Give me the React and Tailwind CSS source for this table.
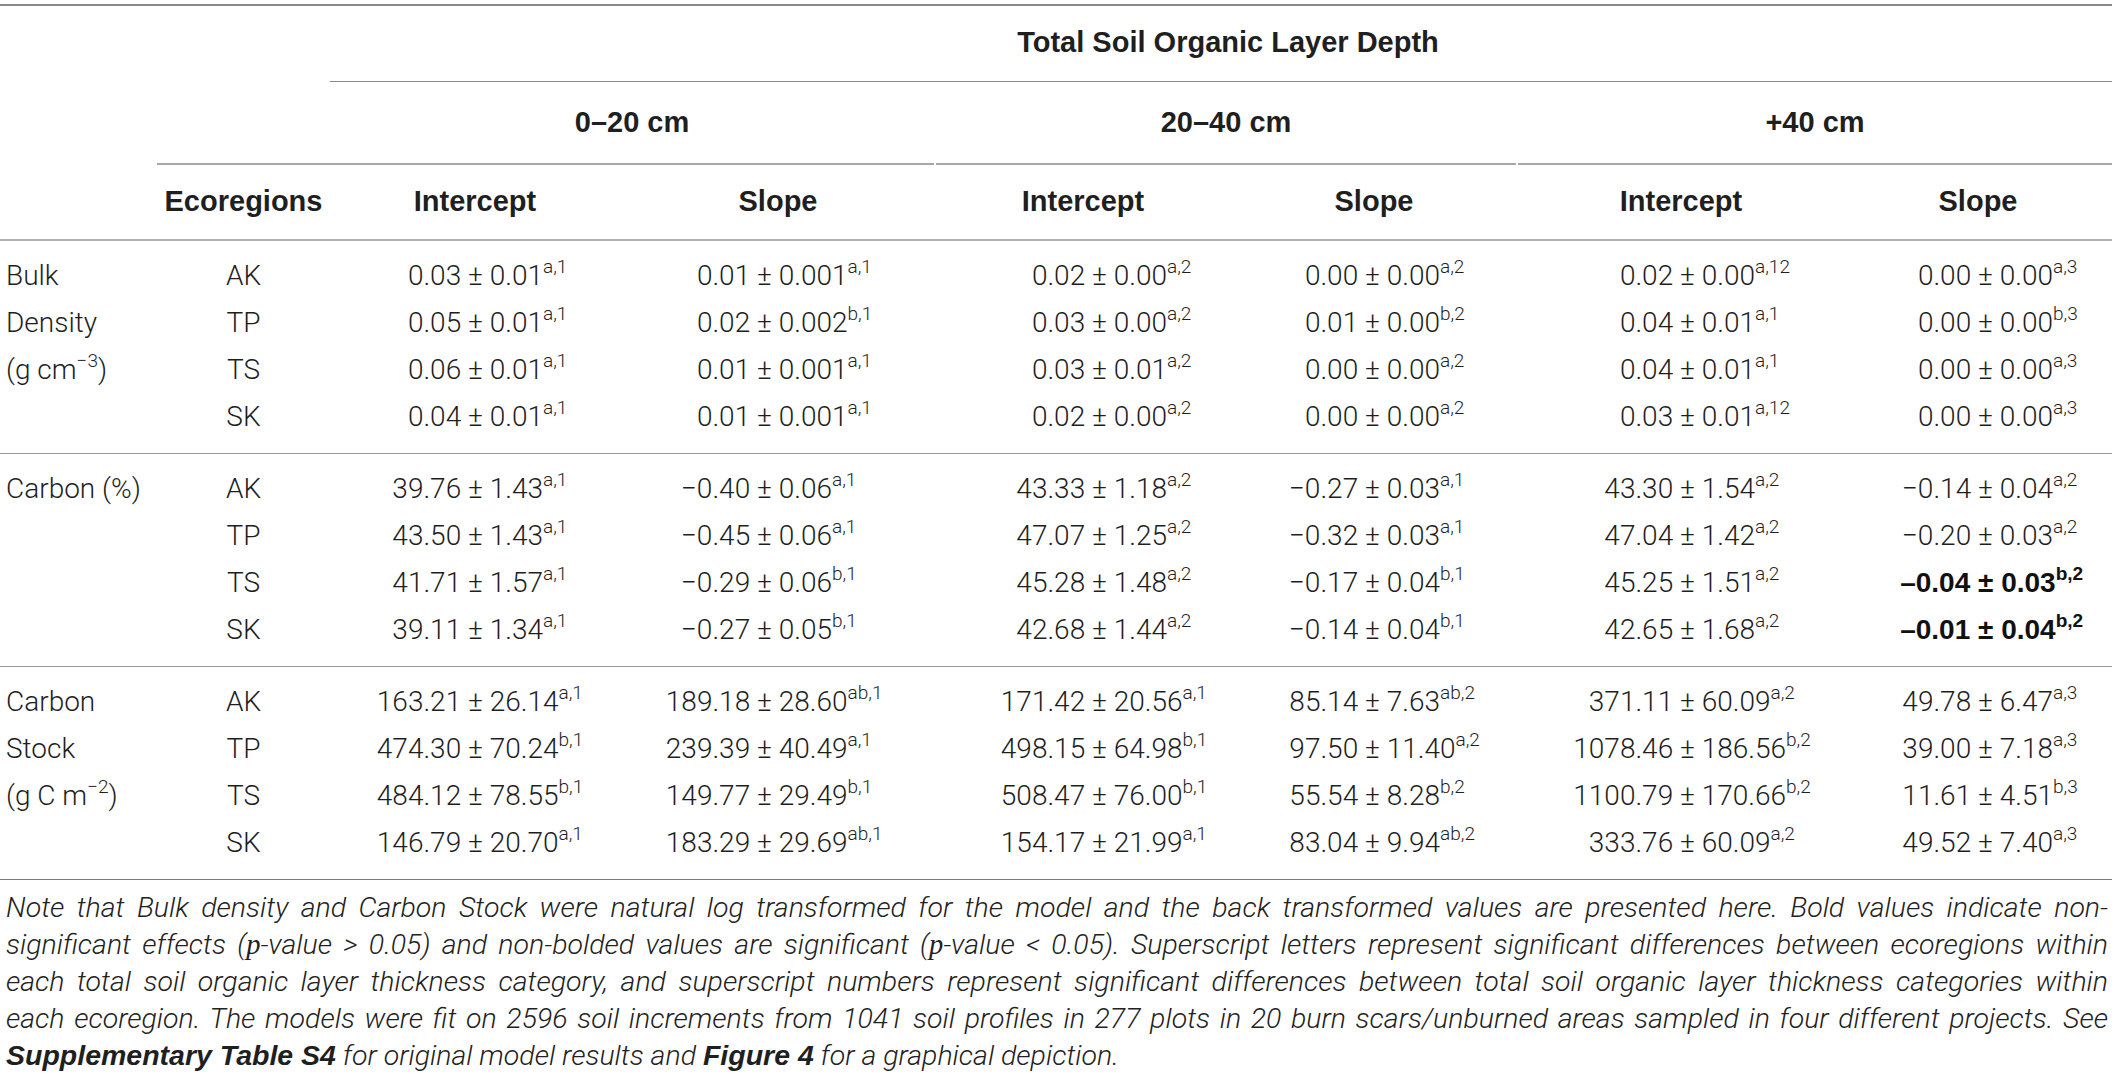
import React from "react";

const COLS = "grid grid-cols-[157px_173px_290px_316px_294px_288px_326px_268px]";
const SPLITS = ["w-[138px]", "w-[137px]", "w-[156px]", "w-[135px]", "w-[162px]", "w-[134px]"];

const groups = [
  {
    labels: ["Bulk", "Density", <>(g cm<sup className="text-[0.68em] top-[-0.6em]">−3</sup>)</>, ""],
    rows: [
      ["AK", [["0.03", "0.01", "a,1"], ["0.01", "0.001", "a,1"], ["0.02", "0.00", "a,2"], ["0.00", "0.00", "a,2"], ["0.02", "0.00", "a,12"], ["0.00", "0.00", "a,3"]]],
      ["TP", [["0.05", "0.01", "a,1"], ["0.02", "0.002", "b,1"], ["0.03", "0.00", "a,2"], ["0.01", "0.00", "b,2"], ["0.04", "0.01", "a,1"], ["0.00", "0.00", "b,3"]]],
      ["TS", [["0.06", "0.01", "a,1"], ["0.01", "0.001", "a,1"], ["0.03", "0.01", "a,2"], ["0.00", "0.00", "a,2"], ["0.04", "0.01", "a,1"], ["0.00", "0.00", "a,3"]]],
      ["SK", [["0.04", "0.01", "a,1"], ["0.01", "0.001", "a,1"], ["0.02", "0.00", "a,2"], ["0.00", "0.00", "a,2"], ["0.03", "0.01", "a,12"], ["0.00", "0.00", "a,3"]]],
    ],
  },
  {
    labels: ["Carbon (%)", "", "", ""],
    rows: [
      ["AK", [["39.76", "1.43", "a,1"], ["−0.40", "0.06", "a,1"], ["43.33", "1.18", "a,2"], ["−0.27", "0.03", "a,1"], ["43.30", "1.54", "a,2"], ["−0.14", "0.04", "a,2"]]],
      ["TP", [["43.50", "1.43", "a,1"], ["−0.45", "0.06", "a,1"], ["47.07", "1.25", "a,2"], ["−0.32", "0.03", "a,1"], ["47.04", "1.42", "a,2"], ["−0.20", "0.03", "a,2"]]],
      ["TS", [["41.71", "1.57", "a,1"], ["−0.29", "0.06", "b,1"], ["45.28", "1.48", "a,2"], ["−0.17", "0.04", "b,1"], ["45.25", "1.51", "a,2"], ["–0.04", "0.03", "b,2", true]]],
      ["SK", [["39.11", "1.34", "a,1"], ["−0.27", "0.05", "b,1"], ["42.68", "1.44", "a,2"], ["−0.14", "0.04", "b,1"], ["42.65", "1.68", "a,2"], ["–0.01", "0.04", "b,2", true]]],
    ],
  },
  {
    labels: ["Carbon", "Stock", <>(g C m<sup className="text-[0.68em] top-[-0.6em]">−2</sup>)</>, ""],
    rows: [
      ["AK", [["163.21", "26.14", "a,1"], ["189.18", "28.60", "ab,1"], ["171.42", "20.56", "a,1"], ["85.14", "7.63", "ab,2"], ["371.11", "60.09", "a,2"], ["49.78", "6.47", "a,3"]]],
      ["TP", [["474.30", "70.24", "b,1"], ["239.39", "40.49", "a,1"], ["498.15", "64.98", "b,1"], ["97.50", "11.40", "a,2"], ["1078.46", "186.56", "b,2"], ["39.00", "7.18", "a,3"]]],
      ["TS", [["484.12", "78.55", "b,1"], ["149.77", "29.49", "b,1"], ["508.47", "76.00", "b,1"], ["55.54", "8.28", "b,2"], ["1100.79", "170.66", "b,2"], ["11.61", "4.51", "b,3"]]],
      ["SK", [["146.79", "20.70", "a,1"], ["183.29", "29.69", "ab,1"], ["154.17", "21.99", "a,1"], ["83.04", "9.94", "ab,2"], ["333.76", "60.09", "a,2"], ["49.52", "7.40", "a,3"]]],
    ],
  },
];

function Val({ v, i }) {
  const [a, b, s, bold] = v;
  return (
    <div
      className={`flex items-center whitespace-nowrap ${
        bold ? "font-['Liberation_Sans',Arial,sans-serif] font-bold text-[#111]" : ""
      }`}
    >
      <span className={`${SPLITS[i]} shrink-0 text-right`}>{a}{"\u00a0"}</span>
      <span>
        ±{"\u00a0"}{b}
        <sup className="text-[0.68em] top-[-0.62em]">{s}</sup>
      </span>
    </div>
  );
}

function Group({ g, last }) {
  return (
    <div className={`pt-[11px] pb-[13px] border-b ${last ? "border-[#7a7a7a]" : "border-[#9a9a9a]"}`}>
      {g.rows.map(([eco, vals], r) => (
        <div key={eco} className={`${COLS} h-[47px] items-center`}>
          <div className="pl-[6px] whitespace-nowrap">{g.labels[r]}</div>
          <div className="text-center">{eco}</div>
          {vals.map((v, i) => (
            <Val key={i} v={v} i={i} />
          ))}
        </div>
      ))}
    </div>
  );
}

const P = () => <span className="font-['Liberation_Serif',serif]">p</span>;

const noteLines = [
  <>Note that Bulk density and Carbon Stock were natural log transformed for the model and the back transformed values are presented here. Bold values indicate non-</>,
  <>significant effects (<P />-value &gt; 0.05) and non-bolded values are significant (<P />-value &lt; 0.05). Superscript letters represent significant differences between ecoregions within</>,
  <>each total soil organic layer thickness category, and superscript numbers represent significant differences between total soil organic layer thickness categories within</>,
  <>each ecoregion. The models were fit on 2596 soil increments from 1041 soil profiles in 277 plots in 20 burn scars/unburned areas sampled in four different projects. See</>,
];

export default function App() {
  return (
    <div className="min-h-screen bg-white font-['Liberation_Sans',Arial,sans-serif] text-[#2b2b2b] pt-[4px]">
      <div className="w-[2112px]">
        {/* Header */}
        <div className="border-t-2 border-[#8a8a8a]">
          <div className={`${COLS} h-[76px]`}>
            <div className="col-span-2" />
            <div className="col-span-6 flex items-center justify-center pl-[14px] pb-[2px] border-b border-[#8a8a8a] text-[29px] font-bold text-[#1f1f1f]">
              Total Soil Organic Layer Depth
            </div>
          </div>
          <div className={`${COLS} h-[83px]`}>
            <div />
            <div className="col-span-3 mr-[2px] grid grid-cols-[173px_1fr] border-b-2 border-[#a8a8a8]">
              <div />
              <div className="flex items-center justify-center text-[29px] font-bold text-[#1f1f1f]">0–20 cm</div>
            </div>
            <div className="col-span-2 mr-[2px] flex items-center justify-center border-b-2 border-[#a8a8a8] text-[29px] font-bold text-[#1f1f1f]">
              20–40 cm
            </div>
            <div className="col-span-2 flex items-center justify-center border-b-2 border-[#a8a8a8] text-[29px] font-bold text-[#1f1f1f]">
              +40 cm
            </div>
          </div>
          <div className={`${COLS} h-[76px] items-center border-b-2 border-[#b0b0b0] text-[29px] font-bold text-[#1f1f1f]`}>
            <div />
            <div className="text-center">Ecoregions</div>
            <div className="text-center">Intercept</div>
            <div className="text-center">Slope</div>
            <div className="text-center">Intercept</div>
            <div className="text-center">Slope</div>
            <div className="text-center">Intercept</div>
            <div className="text-center">Slope</div>
          </div>
        </div>

        {/* Body */}
        <div className="font-['Roboto',sans-serif] font-light text-[28px] text-[#1e1e1e]">
          {groups.map((g, i) => (
            <Group key={i} g={g} last={i === groups.length - 1} />
          ))}
        </div>

        {/* Note */}
        <div className="pt-[9px] pl-[6px] pr-[4px] font-['Roboto',sans-serif] font-light text-[28.5px] italic leading-[37px] text-[#222]">
          {noteLines.map((l, i) => (
            <div key={i} className="whitespace-nowrap text-justify [text-align-last:justify]">
              {l}
            </div>
          ))}
          <div className="whitespace-nowrap">
            <span className="font-['Liberation_Sans',Arial,sans-serif] font-bold text-[#1f1f1f]">Supplementary Table S4</span> for original model results and{" "}
            <span className="font-['Liberation_Sans',Arial,sans-serif] font-bold text-[#1f1f1f]">Figure 4</span> for a graphical depiction.
          </div>
        </div>
      </div>
    </div>
  );
}
